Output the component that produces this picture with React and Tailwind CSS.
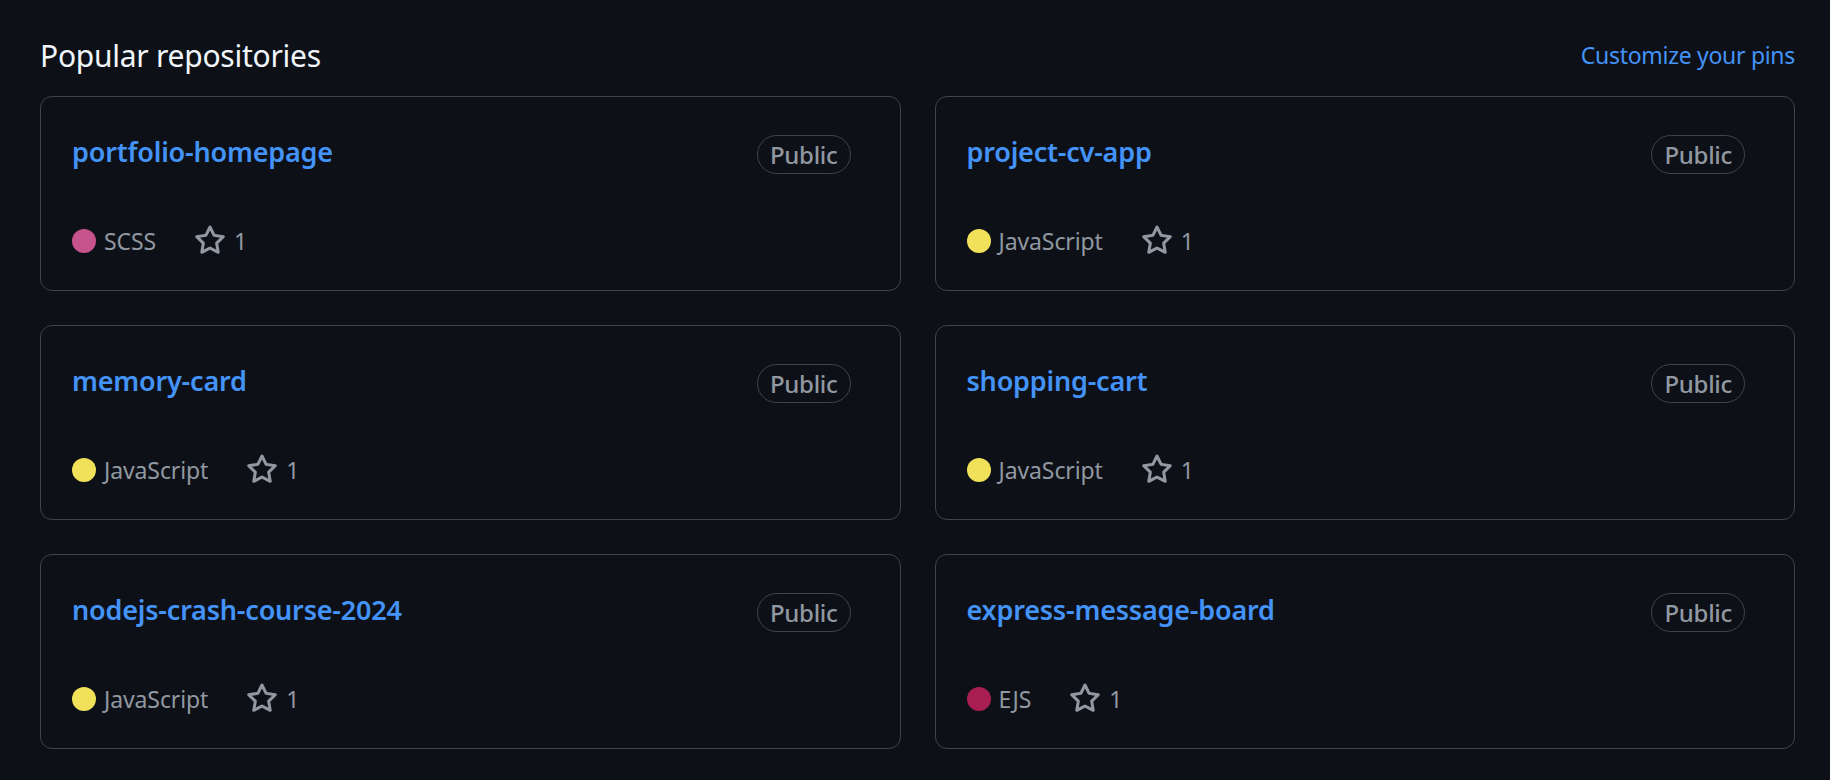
import { Fragment } from "react";

const repos = [
  { name: "portfolio-homepage", lang: "SCSS", color: "#c6538c", stars: 1 },
  { name: "project-cv-app", lang: "JavaScript", color: "#f1e05a", stars: 1 },
  { name: "memory-card", lang: "JavaScript", color: "#f1e05a", stars: 1 },
  { name: "shopping-cart", lang: "JavaScript", color: "#f1e05a", stars: 1 },
  { name: "nodejs-crash-course-2024", lang: "JavaScript", color: "#f1e05a", stars: 1 },
  { name: "express-message-board", lang: "EJS", color: "#a91e50", stars: 1 }
];

function StarIcon() {
  return (
    <svg width="32" height="32" viewBox="0 0 16 16" fill="currentColor" className="shrink-0">
      <path d="M8 .25a.75.75 0 0 1 .673.418l1.882 3.815 4.21.612a.75.75 0 0 1 .416 1.279l-3.046 2.97.719 4.192a.751.751 0 0 1-1.088.791L8 12.347l-3.766 1.98a.75.75 0 0 1-1.088-.79l.72-4.194L.818 6.374a.75.75 0 0 1 .416-1.28l4.21-.611L7.327.668A.75.75 0 0 1 8 .25Zm0 2.445L6.615 5.5a.75.75 0 0 1-.564.41l-3.097.45 2.24 2.184a.75.75 0 0 1 .216.664l-.528 3.084 2.769-1.456a.75.75 0 0 1 .698 0l2.77 1.456-.53-3.084a.75.75 0 0 1 .216-.664l2.24-2.183-3.096-.45a.75.75 0 0 1-.564-.41L8 2.694Z" />
    </svg>
  );
}

function RepoCard({ repo }) {
  return (
    <div className="flex flex-col rounded-[12px] border border-[#3d444d] pl-[31px] pr-[31px] pt-[38px] pb-[31px]">
      <div className="flex h-[39px] items-center pr-[18px]">
        <a href="#" className="mb-[5px] min-w-0 flex-1 truncate text-[27px] font-semibold leading-[40px] tracking-[-0.2px] text-[#4493f8]">
          {repo.name}
        </a>
        <span className="flex h-[39px] items-center rounded-full border border-[#3d444d] px-[12px] text-[24px] font-medium tracking-[-0.3px] text-[#9198a1]">
          Public
        </span>
      </div>
      <div className="mt-[49px] flex h-[36px] items-center text-[23px] leading-[36px] tracking-[-0.1px] text-[#9198a1]">
        <span className="mr-[38px] flex items-center">
          <span className="mr-[8px] h-[24px] w-[24px] rounded-full" style={{ backgroundColor: repo.color }} />
          {repo.lang}
        </span>
        <span className="flex items-center gap-[8px]">
          <StarIcon />
          {repo.stars}
        </span>
      </div>
    </div>
  );
}

export default function App() {
  return (
    <div
      className="min-h-screen bg-[#0d1117] pl-[40px] pr-[35px] pt-[32px]"
      style={{ fontFamily: '"Segoe UI", "Noto Sans", "Open Sans", sans-serif' }}
    >
      <div className="flex h-[48px] items-center justify-between">
        <h2 className="text-[30px] font-normal leading-[48px] tracking-[-0.25px] text-[#f0f6fc]">Popular repositories</h2>
        <a href="#" className="mb-[2px] text-[23px] leading-[36px] tracking-[-0.3px] text-[#4493f8]">Customize your pins</a>
      </div>
      <div className="mt-[16px] grid grid-cols-2 gap-x-[34px] gap-y-[34px]">
        {repos.map((repo) => (
          <Fragment key={repo.name}>
            <RepoCard repo={repo} />
          </Fragment>
        ))}
      </div>
    </div>
  );
}
